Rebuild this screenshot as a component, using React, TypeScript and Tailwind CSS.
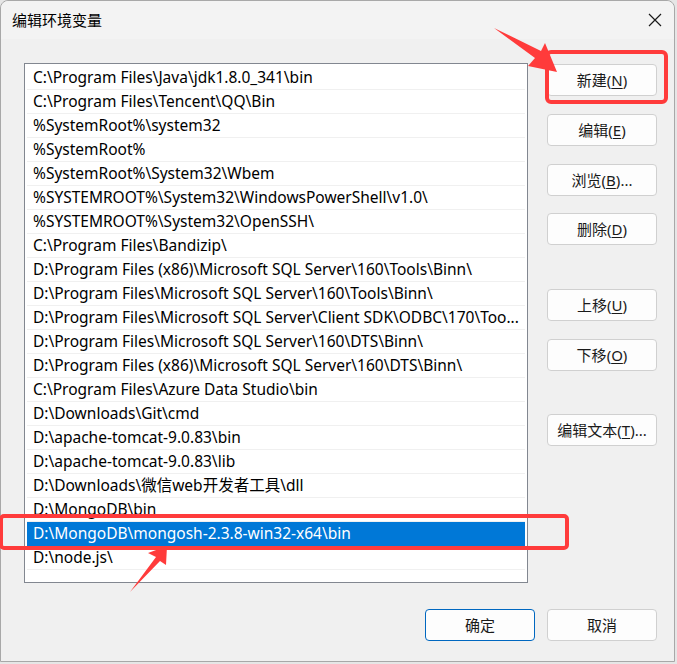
const paths = [
  'C:\\Program Files\\Java\\jdk1.8.0_341\\bin',
  'C:\\Program Files\\Tencent\\QQ\\Bin',
  '%SystemRoot%\\system32',
  '%SystemRoot%',
  '%SystemRoot%\\System32\\Wbem',
  '%SYSTEMROOT%\\System32\\WindowsPowerShell\\v1.0\\',
  '%SYSTEMROOT%\\System32\\OpenSSH\\',
  'C:\\Program Files\\Bandizip\\',
  'D:\\Program Files (x86)\\Microsoft SQL Server\\160\\Tools\\Binn\\',
  'D:\\Program Files\\Microsoft SQL Server\\160\\Tools\\Binn\\',
  'D:\\Program Files\\Microsoft SQL Server\\Client SDK\\ODBC\\170\\Too...',
  'D:\\Program Files\\Microsoft SQL Server\\160\\DTS\\Binn\\',
  'D:\\Program Files (x86)\\Microsoft SQL Server\\160\\DTS\\Binn\\',
  'C:\\Program Files\\Azure Data Studio\\bin',
  'D:\\Downloads\\Git\\cmd',
  'D:\\apache-tomcat-9.0.83\\bin',
  'D:\\apache-tomcat-9.0.83\\lib',
  'D:\\Downloads\\微信web开发者工具\\dll',
  'D:\\MongoDB\\bin',
  'D:\\MongoDB\\mongosh-2.3.8-win32-x64\\bin',
  'D:\\node.js\\',
]

const selected = 19

function Btn({ label, hotkey, suffix = '', primary = false }: { label: string; hotkey?: string; suffix?: string; primary?: boolean }) {
  return (
    <button
      className={`flex h-[32px] w-[110px] items-center justify-center rounded-[4px] border bg-[#fdfdfd] text-[15px] text-[#1a1a1a] ${
        primary ? 'border-[#0067c0]' : 'border-[#d0d0d0]'
      }`}
    >
      {label}
      {hotkey && (
        <>
          (<span className="underline underline-offset-2">{hotkey}</span>)
        </>
      )}
      {suffix}
    </button>
  )
}

export default function App() {
  return (
    <div
      className="relative h-[664px] w-[677px] overflow-hidden bg-[#e6e6e6]"
      style={{ fontFamily: '"Noto Sans", "Noto Sans CJK SC", sans-serif' }}
    >
      <div className="flex h-[662px] w-[675px] flex-col rounded-t-[8px] border border-[#a8a8a8] bg-[#f0f0f0]">
        {/* title bar */}
        <div className="flex h-[38px] items-center justify-between rounded-t-[8px] bg-[#f3f3f3] pl-[11px] pr-[12px]">
          <span className="text-[15px] text-black">编辑环境变量</span>
          <svg width="14" height="14" viewBox="0 0 14 14">
            <path d="M1 1L13 13M13 1L1 13" stroke="#1a1a1a" strokeWidth="1.2" />
          </svg>
        </div>

        <div className="flex gap-[19px] pl-[23px] pt-[24px]">
          {/* path list */}
          <div className="h-[520px] w-[504px] border border-[#828790] bg-white p-[2px]">
            {paths.map((p, i) => (
              <div
                key={i}
                className={`flex h-[24px] items-center whitespace-nowrap border-b pl-[6px] text-[15.5px] ${
                  i === selected ? 'border-[#0078d7] bg-[#0078d7] text-white' : 'border-[#f0f0f0] text-black'
                }`}
              >
                {p}
              </div>
            ))}
          </div>

          {/* side buttons */}
          <div className="flex flex-col pt-[1px]">
            <Btn label="新建" hotkey="N" />
            <div className="h-[18px]" />
            <Btn label="编辑" hotkey="E" />
            <div className="h-[18px]" />
            <Btn label="浏览" hotkey="B" suffix="..." />
            <div className="h-[17px]" />
            <Btn label="删除" hotkey="D" />
            <div className="h-[44px]" />
            <Btn label="上移" hotkey="U" />
            <div className="h-[18px]" />
            <Btn label="下移" hotkey="O" />
            <div className="h-[43px]" />
            <Btn label="编辑文本" hotkey="T" suffix="..." />
          </div>
        </div>

        <div className="flex justify-end gap-[12px] pr-[17px] pt-[26px]">
          <Btn label="确定" primary />
          <Btn label="取消" />
        </div>
      </div>

      {/* red callouts */}
      <svg className="pointer-events-none absolute left-0 top-0" width="677" height="664">
        <rect x="547" y="52" width="119" height="50" rx="4" fill="none" stroke="#ff3b3b" strokeWidth="4" />
        <rect x="1" y="516" width="566" height="32" rx="3" fill="none" stroke="#ff3b3b" strokeWidth="4" />
        <path d="M494 28 L541 51 L545 43 L557 72 L528 66 L535 58 Z" fill="#ff3b3b" />
        <path d="M130 592 L156 557 L148 553 L167 546 L166 565 L160 561 Z" fill="#ff3b3b" />
      </svg>
    </div>
  )
}
